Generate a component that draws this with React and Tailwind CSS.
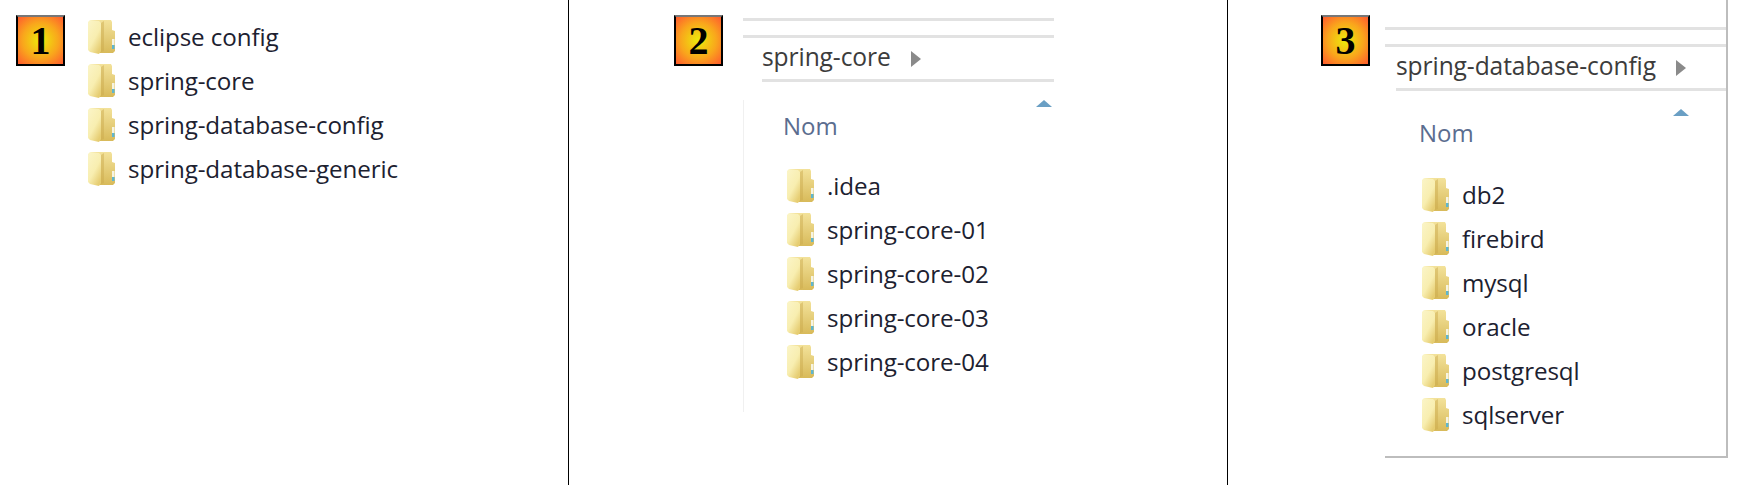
import React from "react";

const FONT = "font-['Open_Sans','Noto_Sans',sans-serif]";

const Folder = () => (
  <svg width="30" height="36" viewBox="0 0 30 36" className="shrink-0">
    <defs>
      <linearGradient id="leaf" x1="0" y1="0" x2="0.7" y2="1">
        <stop offset="0" stopColor="#fbf5c8" />
        <stop offset="0.6" stopColor="#f8eeb0" />
        <stop offset="1" stopColor="#e6cd72" />
      </linearGradient>
      <linearGradient id="back" x1="0" y1="0" x2="0" y2="1">
        <stop offset="0" stopColor="#f3e29a" />
        <stop offset="1" stopColor="#d8ba5a" />
      </linearGradient>
    </defs>
    <path d="M4 1h20l1 2v8l3 1v20l-2 2H12L4 32z" fill="url(#back)" />
    <path d="M1 3l2-2 9 1 2 2v28l-2 3-9-2-2-2z" fill="url(#leaf)" />
    <path d="M14 4l3-2v30l-3 1z" fill="#c9a94c" opacity="0.45" />
    <rect x="25" y="20" width="2.5" height="6" fill="#f6f4e2" />
    <rect x="25" y="26" width="2.5" height="4" fill="#5fb6d0" />
  </svg>
);

const Badge = ({ n }) => (
  <div className="flex h-[51px] w-[49px] shrink-0 items-center justify-center border-2 border-black border-t-[#777] bg-[radial-gradient(circle,#ecec0a_0%,#f9a61c_55%,#ff5a2e_100%)] font-['Liberation_Serif',serif] text-[40px] font-bold leading-none text-black">
    {n}
  </div>
);

const Row = ({ name }) => (
  <div className="flex h-[44px] items-center gap-[11px]">
    <Folder />
    <span className={`${FONT} text-[24.2px] tracking-[-0.1px] text-[#1c2130]`}>{name}</span>
  </div>
);

const Crumb = ({ name }) => (
  <div className="flex h-[44px] items-center border-b-[3px] border-[#e2e2e2]">
    <span className={`${FONT} -mt-[2px] text-[24.6px] tracking-[-0.1px] text-[#3c3c3c]`}>{name}</span>
    <span className="ml-[20px] h-0 w-0 border-y-[8px] border-l-[10px] border-y-transparent border-l-[#8a8a8a]" />
  </div>
);

const SortArrow = () => (
  <div className="flex justify-end">
    <span className="h-0 w-0 border-x-[8px] border-b-[7px] border-x-transparent border-b-[#6a9fc4]" />
  </div>
);

const Nom = () => (
  <div className={`${FONT} text-[24px] leading-[30px] text-[#5b6d8f]`}>Nom</div>
);

const Window = ({ title, names, topGap, crumbLeft, arrowRight, bodyClass, nomGap, listClass, frame }) => (
  <div className={`flex flex-col ${frame ? "border-r-2 border-b-2 border-[#bdbdbd]" : ""}`}>
    <div className={topGap} />
    <div className="h-[17px] border-t-[3px] border-[#e2e2e2]" />
    <div className={`border-t-[3px] border-[#e2e2e2] ${crumbLeft}`}>
      <Crumb name={title} />
    </div>
    <div className={`mt-[18px] flex flex-1 flex-col ${bodyClass}`}>
      <div className={arrowRight}>
        <SortArrow />
      </div>
      <div className={nomGap}>
        <Nom />
      </div>
      <div className={listClass}>
        {names.map((name) => (
          <Row key={name} name={name} />
        ))}
      </div>
    </div>
  </div>
);

export default function App() {
  return (
    <div className="grid h-[485px] w-[1745px] grid-cols-[569px_659px_517px] overflow-hidden bg-white">
      {/* first listing */}
      <div className="flex items-start border-r border-black pl-[16px] pt-[15px]">
        <Badge n="1" />
        <div className="ml-[22px]">
          {["eclipse config", "spring-core", "spring-database-config", "spring-database-generic"].map((name) => (
            <Row key={name} name={name} />
          ))}
        </div>
      </div>

      {/* spring-core */}
      <div className="flex items-start gap-[20px] border-r border-black pl-[105px]">
        <div className="pt-[15px]">
          <Badge n="2" />
        </div>
        <div className="w-[311px]">
          <Window
            title="spring-core"
            names={[".idea", "spring-core-01", "spring-core-02", "spring-core-03", "spring-core-04"]}
            topGap="h-[18px]"
            crumbLeft="pl-[19px]"
            arrowRight="pr-[2px]"
            bodyClass="border-l border-[#f0f0f0] pl-[39px] pb-[28px]"
            nomGap="mt-[4px]"
            listClass="ml-[3px] mt-[23px]"
          />
        </div>
      </div>

      {/* spring-database-config */}
      <div className="flex items-start gap-[15px] pl-[93px]">
        <div className="pt-[15px]">
          <Badge n="3" />
        </div>
        <div className="w-[343px]">
          <Window
            title="spring-database-config"
            names={["db2", "firebird", "mysql", "oracle", "postgresql", "sqlserver"]}
            topGap="h-[27px]"
            crumbLeft="pl-[11px]"
            arrowRight="pr-[37px]"
            bodyClass="pl-[34px] pb-[19px]"
            nomGap="mt-[2px]"
            listClass="ml-[2px] mt-[25px]"
            frame
          />
        </div>
      </div>
    </div>
  );
}
